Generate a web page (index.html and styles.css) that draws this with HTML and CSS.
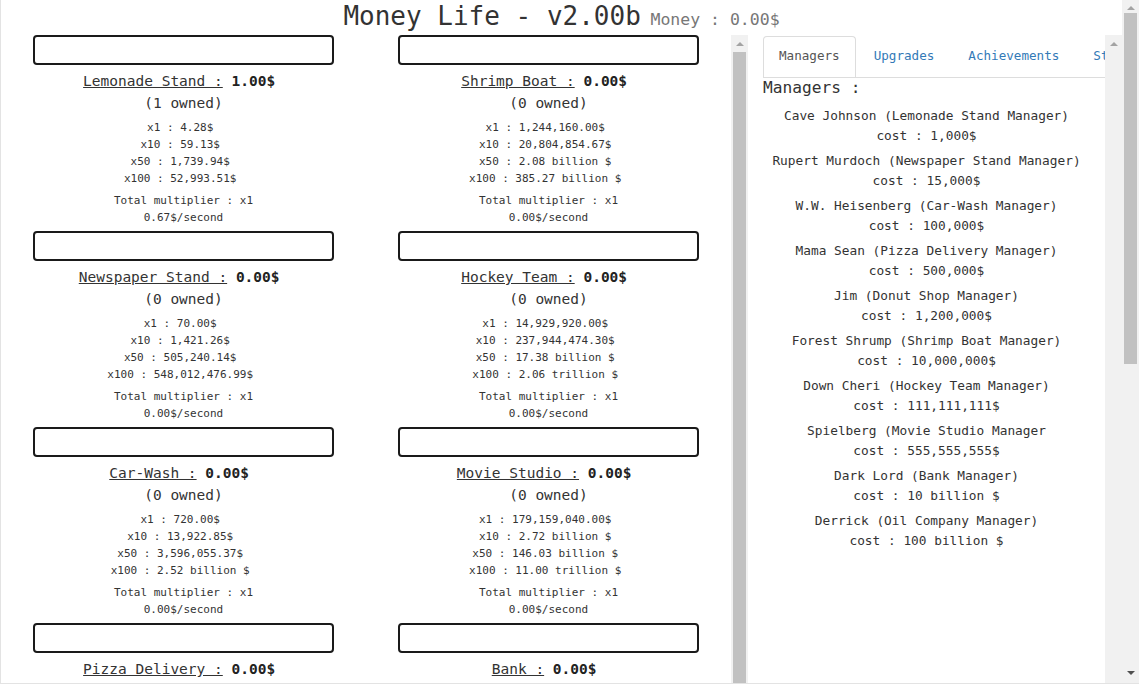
FILE: index.html
```html
<!DOCTYPE html>
<html>
<head>
<meta charset="utf-8">
<title>Money Life</title>
<link rel="stylesheet" href="styles.css">
</head>
<body>
<div class="page">
  <div class="main">
    <header class="header">
      <h1 class="title">Money Life - v2.00b</h1>
      <span class="money">Money : 0.00$</span>
    </header>
    <div class="content">
      <div class="left">
        <div class="grid">
          <div class="card">
            <div class="box"></div>
            <div class="name"><a href="#">Lemonade Stand :</a> <b>1.00$</b>&nbsp;</div>
            <div class="owned">(1 owned)</div>
            <div class="prices"><div>x1 : 4.28$&nbsp;</div><div>x10 : 59.13$&nbsp;</div><div>x50 : 1,739.94$&nbsp;</div><div>x100 : 52,993.51$&nbsp;</div></div>
            <div class="stats"><div>Total multiplier : x1</div><div>0.67$/second</div></div>
          </div>
          <div class="card">
            <div class="box"></div>
            <div class="name"><a href="#">Shrimp Boat :</a> <b>0.00$</b>&nbsp;</div>
            <div class="owned">(0 owned)</div>
            <div class="prices"><div>x1 : 1,244,160.00$&nbsp;</div><div>x10 : 20,804,854.67$&nbsp;</div><div>x50 : 2.08 billion $&nbsp;</div><div>x100 : 385.27 billion $&nbsp;</div></div>
            <div class="stats"><div>Total multiplier : x1</div><div>0.00$/second</div></div>
          </div>
          <div class="card">
            <div class="box"></div>
            <div class="name"><a href="#">Newspaper Stand :</a> <b>0.00$</b>&nbsp;</div>
            <div class="owned">(0 owned)</div>
            <div class="prices"><div>x1 : 70.00$&nbsp;</div><div>x10 : 1,421.26$&nbsp;</div><div>x50 : 505,240.14$&nbsp;</div><div>x100 : 548,012,476.99$&nbsp;</div></div>
            <div class="stats"><div>Total multiplier : x1</div><div>0.00$/second</div></div>
          </div>
          <div class="card">
            <div class="box"></div>
            <div class="name"><a href="#">Hockey Team :</a> <b>0.00$</b>&nbsp;</div>
            <div class="owned">(0 owned)</div>
            <div class="prices"><div>x1 : 14,929,920.00$&nbsp;</div><div>x10 : 237,944,474.30$&nbsp;</div><div>x50 : 17.38 billion $&nbsp;</div><div>x100 : 2.06 trillion $&nbsp;</div></div>
            <div class="stats"><div>Total multiplier : x1</div><div>0.00$/second</div></div>
          </div>
          <div class="card">
            <div class="box"></div>
            <div class="name"><a href="#">Car-Wash :</a> <b>0.00$</b>&nbsp;</div>
            <div class="owned">(0 owned)</div>
            <div class="prices"><div>x1 : 720.00$&nbsp;</div><div>x10 : 13,922.85$&nbsp;</div><div>x50 : 3,596,055.37$&nbsp;</div><div>x100 : 2.52 billion $&nbsp;</div></div>
            <div class="stats"><div>Total multiplier : x1</div><div>0.00$/second</div></div>
          </div>
          <div class="card">
            <div class="box"></div>
            <div class="name"><a href="#">Movie Studio :</a> <b>0.00$</b>&nbsp;</div>
            <div class="owned">(0 owned)</div>
            <div class="prices"><div>x1 : 179,159,040.00$&nbsp;</div><div>x10 : 2.72 billion $&nbsp;</div><div>x50 : 146.03 billion $&nbsp;</div><div>x100 : 11.00 trillion $&nbsp;</div></div>
            <div class="stats"><div>Total multiplier : x1</div><div>0.00$/second</div></div>
          </div>
          <div class="card">
            <div class="box"></div>
            <div class="name"><a href="#">Pizza Delivery :</a> <b>0.00$</b>&nbsp;</div>
            <div class="owned">(0 owned)</div>
          </div>
          <div class="card">
            <div class="box"></div>
            <div class="name"><a href="#">Bank :</a> <b>0.00$</b>&nbsp;</div>
            <div class="owned">(0 owned)</div>
          </div>
        </div>
        <div class="vscroll">
          <div class="arrow-up"></div>
          <div class="thumb thumb-left"></div>
        </div>
      </div>
      <div class="right">
        <div class="panel">
          <ul class="tabs">
            <li class="tab active"><a href="#">Managers</a></li>
            <li class="tab"><a href="#">Upgrades</a></li>
            <li class="tab"><a href="#">Achievements</a></li>
            <li class="tab"><a href="#">Stats</a></li>
          </ul>
          <h3 class="heading">Managers :</h3>
          <div class="managers">
            <div class="mgr"><div>Cave Johnson (Lemonade Stand Manager)</div><div>cost : 1,000$</div></div>
            <div class="mgr"><div>Rupert Murdoch (Newspaper Stand Manager)</div><div>cost : 15,000$</div></div>
            <div class="mgr"><div>W.W. Heisenberg (Car-Wash Manager)</div><div>cost : 100,000$</div></div>
            <div class="mgr"><div>Mama Sean (Pizza Delivery Manager)</div><div>cost : 500,000$</div></div>
            <div class="mgr"><div>Jim (Donut Shop Manager)</div><div>cost : 1,200,000$</div></div>
            <div class="mgr"><div>Forest Shrump (Shrimp Boat Manager)</div><div>cost : 10,000,000$</div></div>
            <div class="mgr"><div>Down Cheri (Hockey Team Manager)</div><div>cost : 111,111,111$</div></div>
            <div class="mgr"><div>Spielberg (Movie Studio Manager</div><div>cost : 555,555,555$</div></div>
            <div class="mgr"><div>Dark Lord (Bank Manager)</div><div>cost : 10 billion $</div></div>
            <div class="mgr"><div>Derrick (Oil Company Manager)</div><div>cost : 100 billion $</div></div>
          </div>
        </div>
        <div class="vscroll">
          <div class="arrow-up"></div>
        </div>
      </div>
    </div>
  </div>
  <div class="vscroll outer">
    <div class="arrow-up arrow-top"></div>
    <div class="thumb thumb-outer"></div>
    <div class="spacer"></div>
    <div class="arrow-down"></div>
  </div>
</div>
</body>
</html>
```

FILE: styles.css
```css
* { box-sizing: border-box; }
html, body { margin: 0; padding: 0; background: #fff; }
body {
  font-family: "DejaVu Sans Mono", "Liberation Mono", monospace;
  color: #333;
  overflow: hidden;
}
.page {
  width: 1139px;
  height: 684px;
  display: flex;
  border-left: 1px solid #e3e3e3;
  border-bottom: 1px solid #e3e3e3;
  overflow: hidden;
}
.main {
  flex: 1;
  display: flex;
  flex-direction: column;
  min-width: 0;
}
.header {
  height: 35px;
  padding-top: 1px;
  line-height: 30px;
  text-align: center;
  white-space: nowrap;
}
.title {
  display: inline;
  margin: 0;
  font-size: 26px;
  font-weight: normal;
  color: #333;
}
.money {
  font-size: 16.5px;
  color: #777;
}
.content {
  flex: 1;
  display: flex;
  min-height: 0;
}
.left {
  width: 747px;
  display: flex;
  overflow: hidden;
}
.grid {
  width: 730px;
  display: grid;
  grid-template-columns: 1fr 1fr;
  align-content: start;
  overflow: hidden;
}
.card {
  height: 196px;
  display: flex;
  flex-direction: column;
  align-items: center;
  text-align: center;
  white-space: nowrap;
}
.box {
  width: 301px;
  height: 30px;
  border: 2px solid #1a1a1a;
  border-radius: 4px;
  flex: none;
}
.name {
  margin-top: 5px;
  line-height: 22px;
  font-size: 14.5px;
}
.name a {
  color: #333;
  text-decoration: underline;
}
.name b { font-weight: bold; color: #222; }
.owned {
  line-height: 22px;
  font-size: 14.5px;
}
.prices {
  margin-top: 5px;
  font-size: 11px;
  line-height: 17px;
}
.stats {
  margin-top: 5px;
  font-size: 11px;
  line-height: 17px;
}
.vscroll {
  width: 17px;
  flex: none;
  background: #f1f1f1;
  display: flex;
  flex-direction: column;
  align-items: center;
}
.arrow-up {
  margin-top: 7px;
  width: 0;
  height: 0;
  border-left: 4px solid transparent;
  border-right: 4px solid transparent;
  border-bottom: 4px solid #a3a3a3;
}
.arrow-down {
  margin-bottom: 8px;
  width: 0;
  height: 0;
  border-left: 4px solid transparent;
  border-right: 4px solid transparent;
  border-top: 4px solid #505050;
}
.thumb {
  width: 13px;
  background: #c1c1c1;
}
.thumb-left {
  margin-top: 6px;
  flex: 1;
}
.right {
  flex: 1;
  display: flex;
  min-width: 0;
}
.panel {
  flex: 1;
  min-width: 0;
  padding: 0 15px;
  overflow: hidden;
}
.tabs {
  list-style: none;
  margin: 1px -15px 0 0;
  padding: 0;
  display: flex;
  border-bottom: 1px solid #ddd;
  overflow: hidden;
  white-space: nowrap;
}
.tab {
  margin-bottom: -1px;
  margin-right: 2px;
  flex: none;
}
.tab a {
  display: block;
  padding: 9px 15px 11px;
  line-height: 20px;
  font-size: 12.6px;
  color: #337ab7;
  text-decoration: none;
  border: 1px solid transparent;
  border-radius: 4px 4px 0 0;
}
.tab.active a {
  color: #555;
  background: #fff;
  border-color: #ddd #ddd transparent #ddd;
}
.heading {
  margin: 0;
  font-size: 16.2px;
  font-weight: normal;
  line-height: 20px;
  height: 22px;
}
.managers {
  padding-top: 1px;
  text-align: center;
  font-size: 12.8px;
  line-height: 20px;
  white-space: nowrap;
}
.mgr { margin-top: 5px; }
.outer {
  height: 683px;
}
.arrow-top { margin-top: 6px; }
.thumb-outer {
  margin-top: 3px;
  height: 351px;
}
.spacer { flex: 1; }
```
